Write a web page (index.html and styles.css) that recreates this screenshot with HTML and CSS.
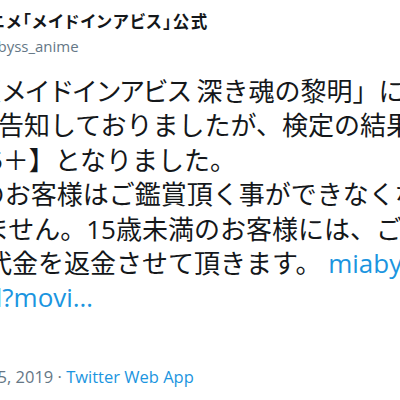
FILE: index.html
```html
<!DOCTYPE html>
<html lang="ja">
<head>
<meta charset="utf-8">
<title>Tweet</title>
<link rel="stylesheet" href="styles.css">
</head>
<body>
<article class="tweet">
  <header class="author">
    <div class="name">TVアニメ「メイドインアビス」公式</div>
    <div class="handle">@miabyss_anime</div>
  </header>
  <div class="text">
    <div class="ln l1">「劇場版<span class="kana">メイドインアビス</span> 深き魂の黎明」につきまして、</div>
    <div class="ln l2">を予定と告知しておりましたが、検定の結果、</div>
    <div class="ln l3">【R15＋】となりました。</div>
    <div class="ln l4">15歳未満のお客様はご鑑賞頂く事ができなくなり、</div>
    <div class="ln l5">誠に申し訳ございません。15歳未満のお客様には、ご購入</div>
    <div class="ln l6">前売券代金を返金させて頂きます。 <a class="link" href="#">miabyss.com/movie/detai</a></div>
    <div class="ln l7"><a class="link" href="#">detail?movi…</a></div>
  </div>
  <div class="meta">4:00 AM · Dec 5, 2019 · <a class="source" href="#">Twitter Web App</a></div>
</article>
</body>
</html>
```
FILE: styles.css
```css
html, body {
  margin: 0;
  padding: 0;
  background: #ffffff;
}
body {
  width: 400px;
  height: 400px;
  overflow: hidden;
  font-family: "Open Sans", "Noto Sans CJK JP", sans-serif;
  color: #14171a;
}
.tweet {
  display: flex;
  flex-direction: column;
  padding-top: 10px;
}
.author {
  display: flex;
  flex-direction: column;
}
.name {
  margin-left: -51px;
  font-family: "Noto Sans CJK JP", sans-serif;
  font-weight: 700;
  font-size: 16.5px;
  line-height: 22px;
  letter-spacing: 1.4px;
  font-feature-settings: "palt";
  white-space: nowrap;
}
.handle {
  margin-top: 3px;
  margin-left: -42px;
  font-size: 15px;
  line-height: 22px;
  color: #657786;
  white-space: nowrap;
}
.text {
  margin-top: 17px;
  font-size: 26px;
  line-height: 34.4px;
  white-space: nowrap;
}
.kana { letter-spacing: -2.4px; }
.ln { margin-left: -103px; }
.l2 { margin-left: -106px; }
.l3 { margin-left: -69px; }
.l4 { margin-left: -129px; }
.l5 { margin-left: -225px; }
.l6 { margin-left: -92px; }
.l7 { margin-left: -65px; }
.link, .source {
  color: #1b95e0;
  text-decoration: none;
}
.meta {
  margin-top: 51px;
  margin-left: -111px;
  font-size: 16.5px;
  line-height: 22px;
  color: #657786;
  white-space: nowrap;
}
```
